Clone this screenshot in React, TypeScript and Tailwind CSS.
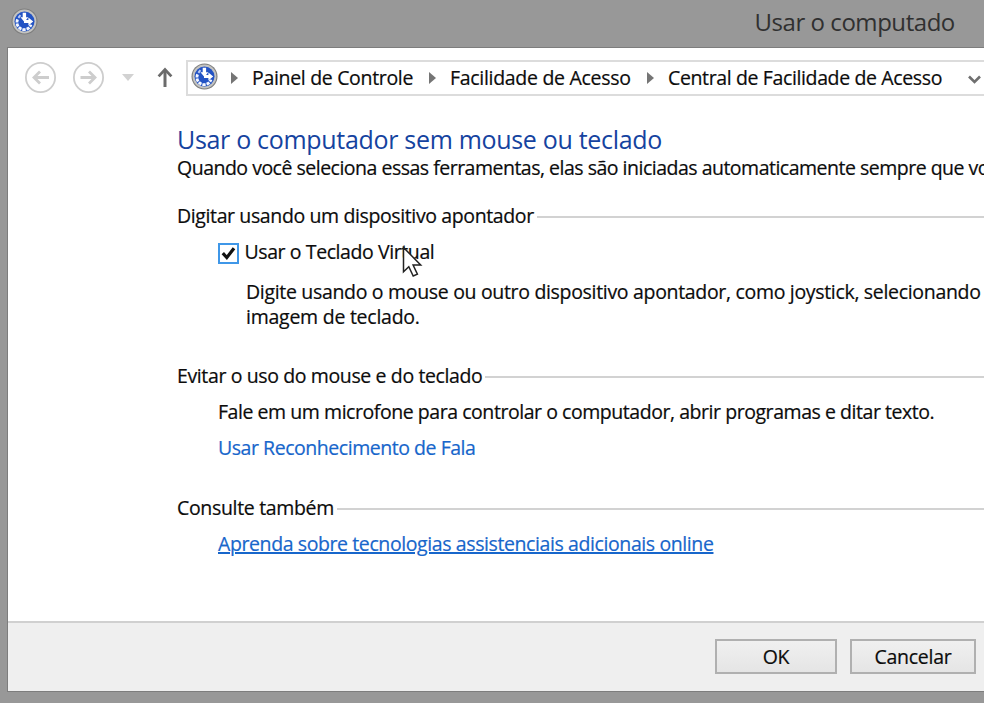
import type { ReactNode } from "react";
import { clsx } from "clsx";

interface SectionProps {
  title: string;
  className?: string;
  tracking: string;
  children: ReactNode;
}

const crumbs = [
  { label: "Painel de Controle", className: "ml-[14px] w-[161px] tracking-[-0.32px]" },
  { label: "Facilidade de Acesso", className: "ml-[14px] w-[181px] tracking-[-0.3px]" },
  { label: "Central de Facilidade de Acesso", className: "ml-[14px] w-[276px] tracking-[-0.37px]" },
];

function EaseOfAccessIcon({ className }: { className?: string }) {
  return (
    <svg className={clsx("h-[27px] w-[27px] shrink-0", className)} viewBox="0 0 27 27" fill="none">
      <circle cx="13.5" cy="13.5" r="13" fill="#7d7d7d" />
      <circle cx="13.5" cy="13.5" r="11.9" fill="#c3c3c1" />
      <circle cx="13.5" cy="13.5" r="10" fill="#2353c4" />
      <path d="M6.6 11.4a7.2 7.2 0 1 0 13.4 5.2" stroke="#f4f7ff" strokeWidth="2.8" strokeDasharray="3.2 1" />
      <path d="M7.4 9.8 9.4 7.2" stroke="#b9caf5" strokeWidth="2" />
      <path d="M11.7 4.8h3.4v4.4h2.2l-3.9 4.9-3.9-4.9h2.2z" fill="#fff" />
      <path d="M13 12h4.4V9.4l4.8 4-4.8 4v-2.5H13z" fill="#fff" />
    </svg>
  );
}

function NavCircle({ className, forward }: { className?: string; forward?: boolean }) {
  return (
    <svg className={clsx("h-8 w-8 shrink-0", className)} viewBox="0 0 32 32" fill="none" stroke="#cdcdcd">
      <circle cx="16.5" cy="15.5" r="14.6" strokeWidth="1.8" />
      <path
        d={forward ? "M8.5 15.5h14M17 9.5l6 6-6 6" : "M25 15.5H11M16 9.5l-6 6 6 6"}
        strokeWidth="2.8"
      />
    </svg>
  );
}

function CrumbArrow({ className }: { className?: string }) {
  return (
    <svg className={clsx("h-3 w-[7px] shrink-0", className)} viewBox="0 0 7 12">
      <path d="M0 0l7 6-7 6z" fill="#757575" />
    </svg>
  );
}

function Section({ title, className, tracking, children }: SectionProps) {
  return (
    <section className={className}>
      <div className="flex h-6">
        <h2 className={clsx("shrink-0 whitespace-nowrap", tracking)}>{title}</h2>
        <span className="ml-[3px] mt-3 h-[2px] flex-1 bg-[#d2d2d2]" />
      </div>
      {children}
    </section>
  );
}

function DialogButton({ label, className }: { label: string; className: string }) {
  return (
    <button
      className={clsx(
        "h-[35px] shrink-0 border-2 border-[#b0b0b0] bg-linear-to-b from-[#f0f0f0] to-[#e5e5e5] leading-[30px] tracking-[-0.25px]",
        className,
      )}
    >
      {label}
    </button>
  );
}

export default function App() {
  return (
    <div className="flex h-[703px] w-[984px] flex-col overflow-hidden bg-[#989898] font-['Open_Sans','Noto_Sans',sans-serif] text-[19.5px] leading-6 text-[#0c0c0c] [-webkit-text-stroke:0.2px]">
      <header className="flex h-[47px] shrink-0">
        <EaseOfAccessIcon className="ml-[11px] mt-2" />
        <h1 className="ml-[716.5px] mt-2 whitespace-nowrap text-[24px] leading-7 tracking-[-0.45px] text-[#303030] [-webkit-text-stroke:0]">
          Usar o computado
        </h1>
      </header>

      <div className="ml-[7px] flex h-[645px] shrink-0 flex-col border-y border-l border-[#7d7d7d] bg-white">
        <nav className="flex h-[61px] shrink-0 pt-[12px]">
          <NavCircle className="ml-4 mt-[2px]" />
          <NavCircle className="ml-4 mt-[2px]" forward />
          <svg className="ml-[18px] mt-[14px] h-[7px] w-3 shrink-0" viewBox="0 0 12 7">
            <path d="M0 0h12L6 7z" fill="#d2d2d2" />
          </svg>
          <svg className="ml-[23px] mt-[7px] h-5 w-4 shrink-0" viewBox="0 0 16 20" fill="none" stroke="#6b6b6b">
            <path d="M8 20V3" strokeWidth="3" />
            <path d="M1.6 9.4 8 2.6l6.4 6.8" strokeWidth="2.8" />
          </svg>
          <div className="ml-[13px] flex h-9 flex-1 items-center border-y-2 border-l-2 border-[#dcdcdc]">
            <EaseOfAccessIcon className="mb-1 ml-[2.5px]" />
            {crumbs.map((crumb, i) => (
              <div key={crumb.label} className="flex shrink-0 items-center">
                <CrumbArrow className={i === 0 ? "ml-[13.5px]" : "ml-4"} />
                <span className={clsx("whitespace-nowrap", crumb.className)}>{crumb.label}</span>
              </div>
            ))}
            <svg className="ml-[24px] mt-[2px] h-[9px] w-[13px] shrink-0" viewBox="0 0 13 9" fill="none">
              <path d="M1 1.5 6.5 7 12 1.5" stroke="#6f6f6f" strokeWidth="2.6" />
            </svg>
          </div>
        </nav>

        <main className="flex-1 overflow-hidden pl-[169px] pt-4">
          <h1 className="whitespace-nowrap text-[25px] leading-7 tracking-[-0.31px] text-[#15439f] [-webkit-text-stroke:0]">
            Usar o computador sem mouse ou teclado
          </h1>
          <p className="mt-[3px] whitespace-nowrap tracking-[-0.5px]">
            Quando você seleciona essas ferramentas, elas são iniciadas automaticamente sempre que vo
          </p>

          <Section title="Digitar usando um dispositivo apontador" className="mt-6" tracking="tracking-[-0.38px]">
            <label className="relative mt-3 flex w-fit whitespace-nowrap pl-[41px]">
              <span className="mt-[3px] flex h-[21px] w-[21px] items-center justify-center border-2 border-[#3f97e8] bg-white">
                <svg className="h-[15px] w-[15px]" viewBox="0 0 15 15" fill="none">
                  <path d="M1.8 7.2 5.8 11.6 13 2.2" stroke="#111" strokeWidth="3.2" />
                </svg>
              </span>
              <span className="ml-[5.5px] tracking-[-0.41px]">Usar o Teclado Virtual</span>
              {/* mouse pointer resting over the label */}
              <svg className="absolute left-[225px] top-[6px] h-[32px] w-[22px]" viewBox="0 0 22 32">
                <path
                  d="M1.5 1.5v24.3l5.3-5 4.4 9.2 4.2-1.9-4.3-9.1h7.6z"
                  fill="#fff"
                  stroke="#222"
                  strokeWidth="1.5"
                />
              </svg>
            </label>
            <p className="mt-[15px] whitespace-nowrap pl-[69px] leading-[25px] tracking-[-0.32px]">
              Digite usando o mouse ou outro dispositivo apontador, como joystick, selecionando
              <br />
              <span className="tracking-[-0.25px]">imagem de teclado.</span>
            </p>
          </Section>

          <Section title="Evitar o uso do mouse e do teclado" className="mt-[35px]" tracking="tracking-[-0.38px]">
            <p className="mt-3 whitespace-nowrap pl-[41px] tracking-[-0.45px]">
              Fale em um microfone para controlar o computador, abrir programas e ditar texto.
            </p>
            <a className="mt-3 block pl-[41px] tracking-[-0.46px] text-[#1766cb]">Usar Reconhecimento de Fala</a>
          </Section>

          <Section title="Consulte também" className="mt-9" tracking="tracking-[-0.33px]">
            <a className="ml-[41px] mt-3 block w-fit whitespace-nowrap tracking-[-0.4px] text-[#1766cb] underline decoration-2 underline-offset-1">
              Aprenda sobre tecnologias assistenciais adicionais online
            </a>
          </Section>
        </main>

        <footer className="flex h-[70px] shrink-0 border-t-2 border-[#d0d0d0] bg-[#efefef] pl-[707px] pt-4">
          <DialogButton label="OK" className="w-[122px]" />
          <DialogButton label="Cancelar" className="ml-[13px] w-[126px]" />
        </footer>
      </div>
    </div>
  );
}
